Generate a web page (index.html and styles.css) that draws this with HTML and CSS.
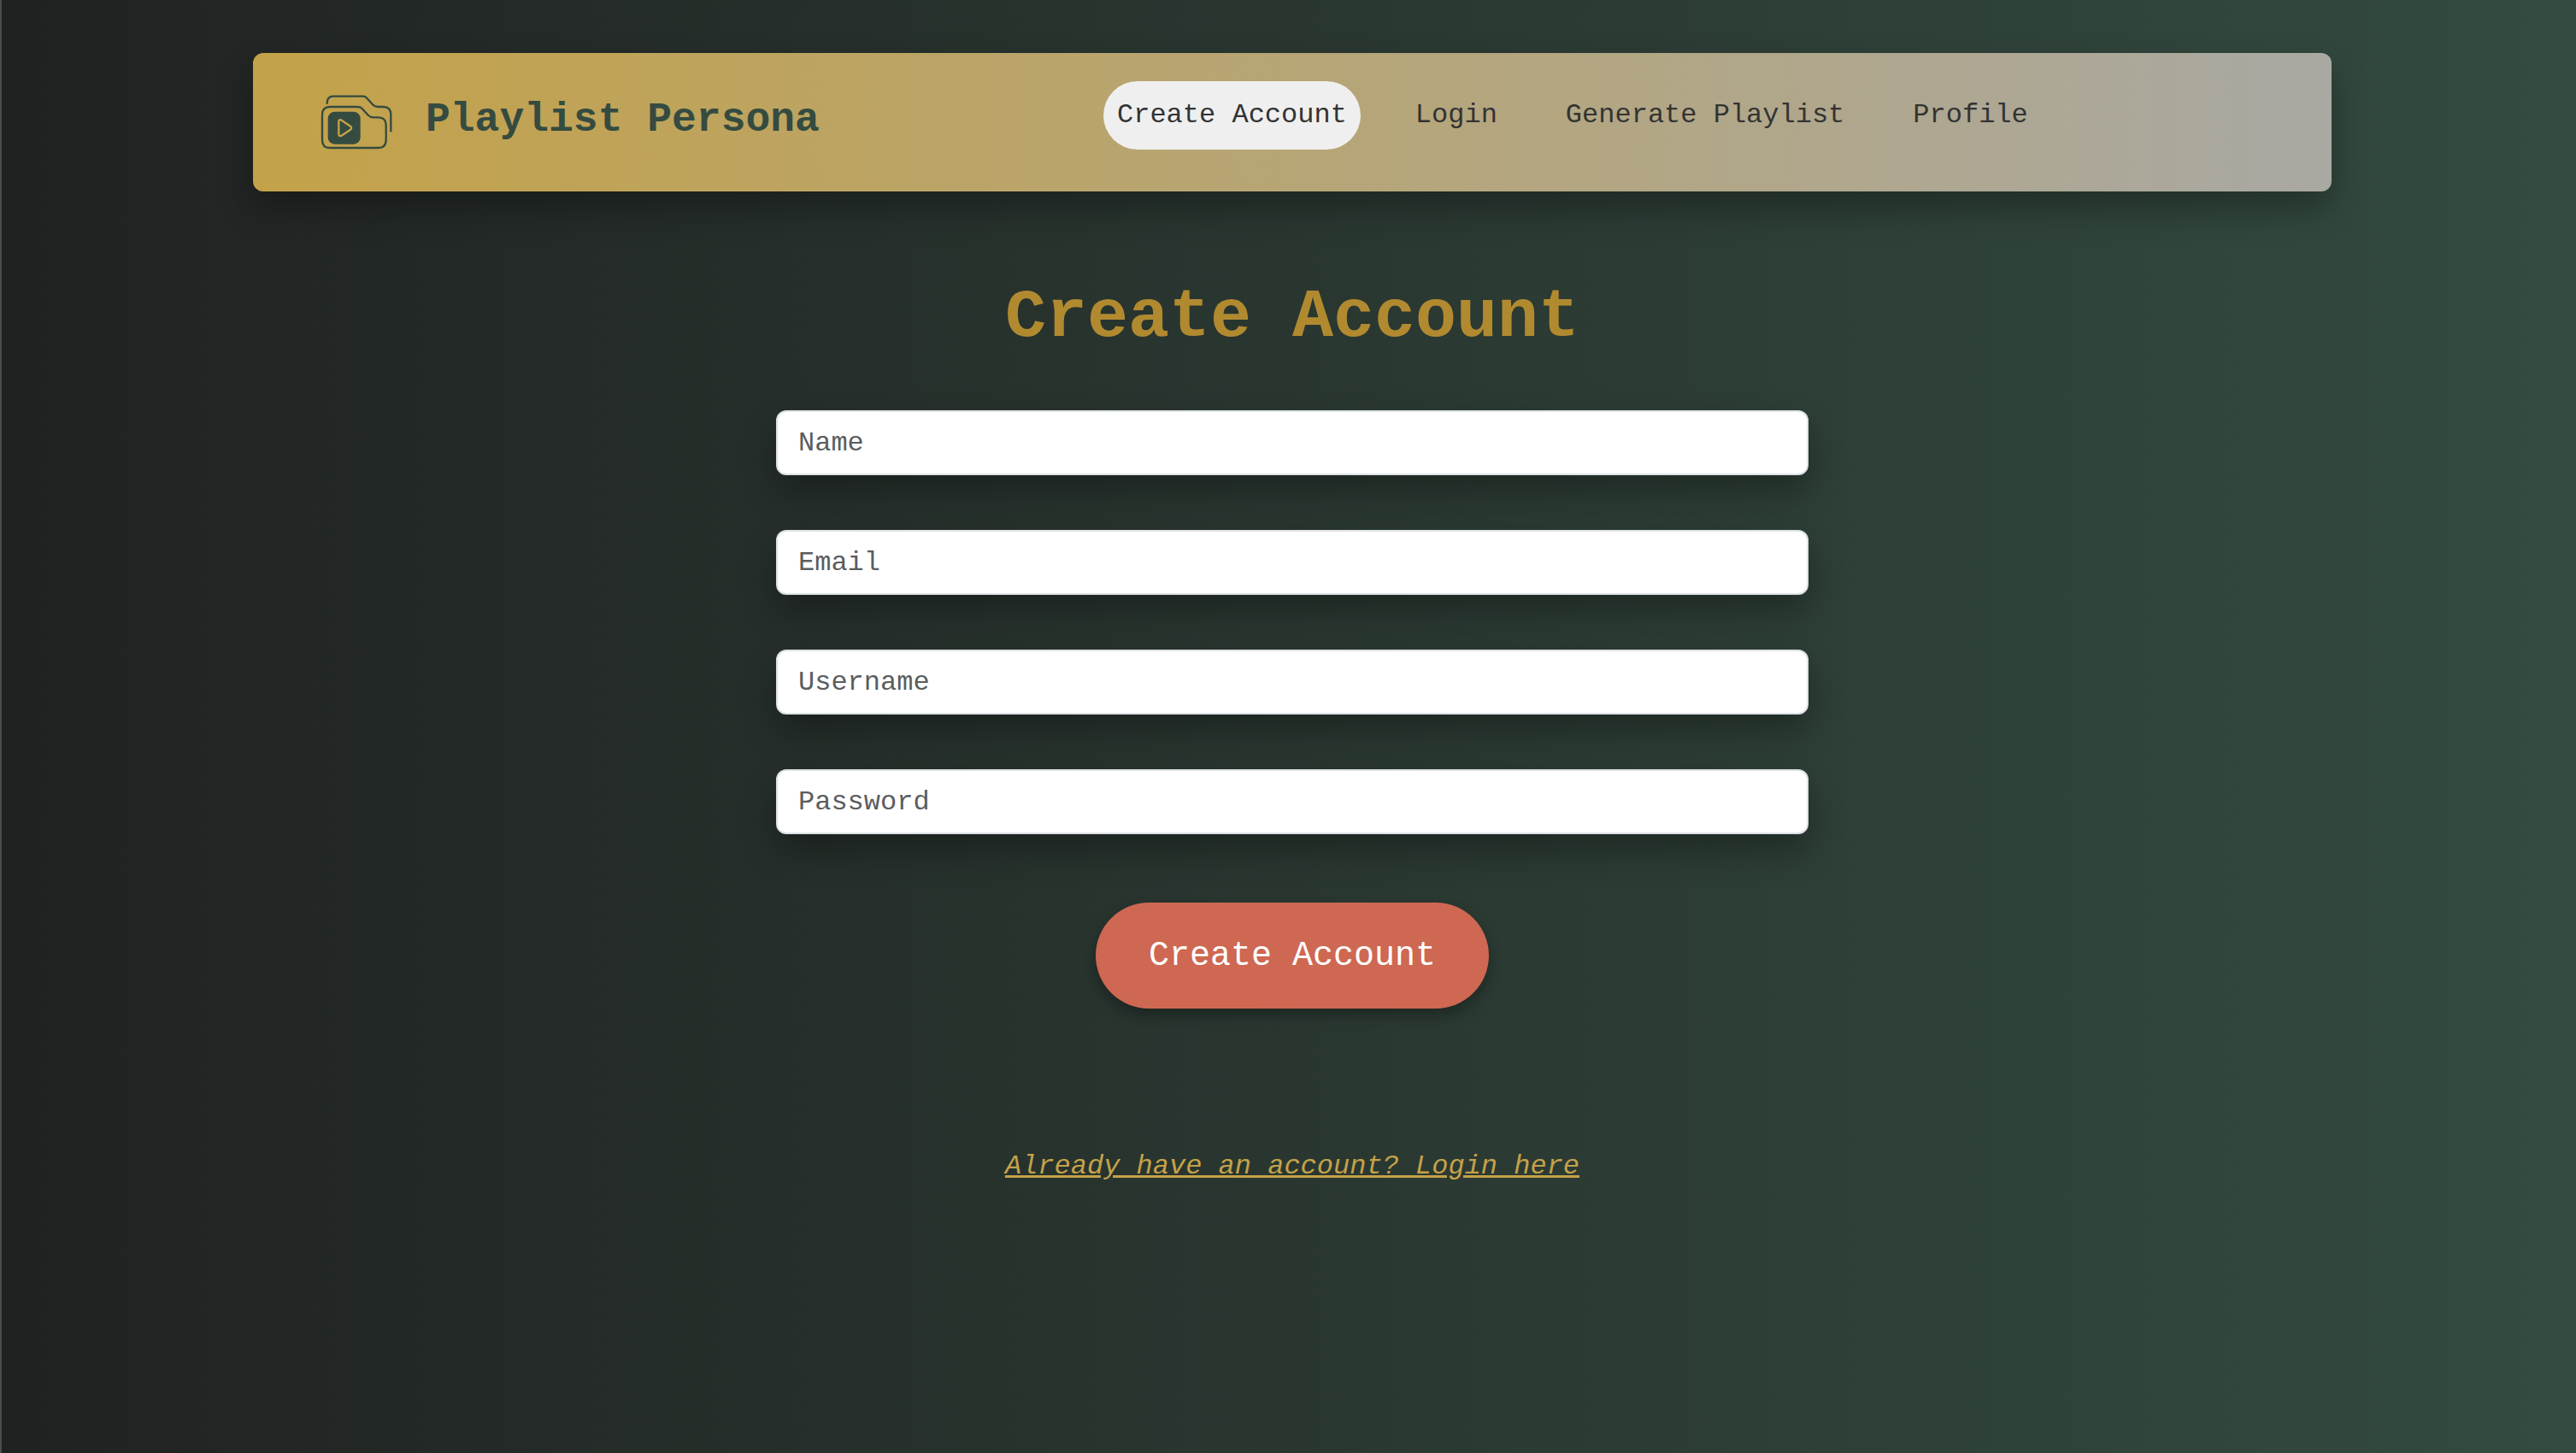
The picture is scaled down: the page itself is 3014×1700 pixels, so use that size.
FILE: index.html
```html
<!DOCTYPE html>
<html lang="en">
<head>
  <meta charset="utf-8">
  <meta name="viewport" content="width=device-width, initial-scale=1">
  <title>Playlist Persona</title>
  <link rel="stylesheet" href="styles.css">
</head>
<body>
  <header class="site-header">
    <a class="brand" href="#">
      <svg class="brand-logo" viewBox="42 45 258 195" fill="none" stroke="currentColor" stroke-width="7" stroke-linecap="round" stroke-linejoin="round" aria-hidden="true">
        <path d="M68 78V76Q68 53 90 53H194Q203 53 209 61L228 82Q235 90 247 90H266Q292 90 292 118V175"/>
        <path d="M78 90H176Q186 90 193 98L213 120Q220 127 230 127H248Q275 127 275 155V206Q275 234 246 234H78Q51 234 51 206V118Q51 90 78 90Z"/>
        <rect x="71" y="107" width="114" height="114" rx="24" fill="currentColor" stroke="none"/>
        <path class="logo-play" d="M109 143Q109 132 119 137L150 158Q157 164 150 170L121 190Q109 196 109 185Z"/>
      </svg>
      <span class="brand-name">Playlist Persona</span>
    </a>
    <nav class="site-nav">
      <a class="nav-link active" href="#" aria-current="page">Create Account</a>
      <a class="nav-link" href="#">Login</a>
      <a class="nav-link" href="#">Generate Playlist</a>
      <a class="nav-link" href="#">Profile</a>
    </nav>
  </header>
  <main class="signup">
    <h1 class="title">Create Account</h1>
    <form class="signup-form">
      <input class="field" type="text" name="name" placeholder="Name" aria-label="Name">
      <input class="field" type="email" name="email" placeholder="Email" aria-label="Email">
      <input class="field" type="text" name="username" placeholder="Username" aria-label="Username">
      <input class="field" type="password" name="password" placeholder="Password" aria-label="Password">
      <button class="submit" type="submit">Create Account</button>
    </form>
    <a class="login-link" href="#">Already have an account? Login here</a>
  </main>
</body>
</html>
```
FILE: styles.css
```css
* {
  box-sizing: border-box;
}

body {
  min-height: 100vh;
  margin: 0;
  padding: 62px 0 62px 8px;
  border-left: 2px solid #4b4d4c;
  background: linear-gradient(90deg, #202221, #334b40);
  font-family: "Liberation Mono", monospace;
  font-size: 32px;
}

.site-header {
  display: flex;
  align-items: flex-start;
  width: 81%;
  max-width: 2432px;
  min-height: 162px;
  margin: 0 auto;
  padding: 33px 80px 0 78px;
  border-radius: 12px;
  background: linear-gradient(90deg, #c4a249, #a9a8a2);
  box-shadow: 0 20px 40px rgba(0, 0, 0, 0.3);
}

.brand {
  display: flex;
  flex: 0 0 917px;
  align-items: flex-start;
  gap: 38px;
  color: #354b40;
  text-decoration: none;
}

.brand-logo {
  width: 86px;
  height: 65px;
  margin-top: 15px;
}

.logo-play {
  stroke: #c4a249;
}

.brand-name {
  font-size: 48px;
  font-weight: 700;
  line-height: 90px;
}

.site-nav {
  display: flex;
  gap: 48px;
}

.nav-link {
  padding: 0 16px;
  border-radius: 40px;
  color: #333;
  line-height: 80px;
  text-decoration: none;
  white-space: nowrap;
}

.nav-link.active {
  background: #efefef;
}

.signup {
  display: flex;
  flex-direction: column;
  align-items: center;
  padding-top: 100px;
}

.title {
  margin: 0;
  color: #b18a30;
  font-size: 80px;
  font-weight: 700;
  line-height: 96px;
}

.signup-form {
  display: flex;
  flex-direction: column;
  gap: 64px;
  width: 90%;
  max-width: 1208px;
  margin-top: 60px;
}

.field {
  width: 100%;
  height: 76px;
  padding: 0 24px;
  border: 2px solid #dee2e6;
  border-radius: 12px;
  background: #fff;
  box-shadow: 0 20px 40px rgba(0, 0, 0, 0.3);
  color: #212529;
  font: inherit;
}

.field::placeholder {
  color: #5a5d60;
  opacity: 1;
}

.submit {
  align-self: center;
  margin-top: 16px;
  padding: 2px 62px 0;
  border: 0;
  border-radius: 62px;
  background: #ce6852;
  box-shadow: 0 8px 16px rgba(0, 0, 0, 0.3);
  color: #fff;
  font-family: inherit;
  font-size: 40px;
  line-height: 122px;
}

.login-link {
  margin-top: 161px;
  color: #c4a249;
  font-style: italic;
  line-height: 48px;
  text-decoration-thickness: 3px;
}
```
